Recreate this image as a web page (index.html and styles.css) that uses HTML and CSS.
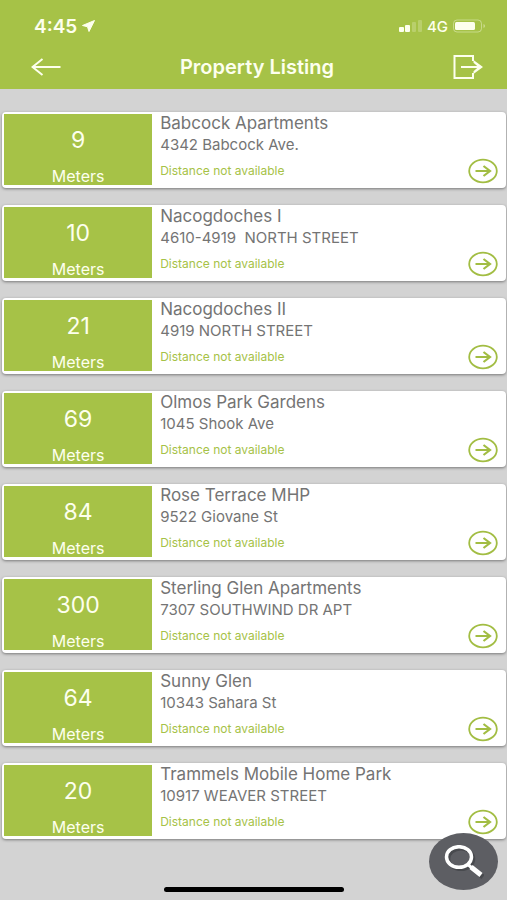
FILE: index.html
```html
<!DOCTYPE html>
<html lang="en">
<head>
<meta charset="utf-8">
<meta name="viewport" content="width=device-width, initial-scale=1">
<title>Property Listing</title>
<link rel="stylesheet" href="styles.css">
</head>
<body>
<svg class="sprite" aria-hidden="true">
  <symbol id="go" viewBox="0 0 30 26">
    <ellipse cx="15" cy="13" rx="13.8" ry="11.3" fill="none" stroke="currentColor" stroke-width="1.8"/>
    <path d="M7.500 13H21M15.500 8l6.500 5-6.500 5" fill="none" stroke="currentColor" stroke-width="2.200"/>
  </symbol>
</svg>
<header class="header">
  <div class="status">
    <div class="status-side">
      <span class="time">4:45</span>
      <svg class="location" viewBox="0 0 13 12" aria-hidden="true"><path d="M12.500 0.500L0.500 5.500L5.500 6.800L7 11.500Z" fill="currentColor" stroke="currentColor" stroke-linejoin="round"/></svg>
    </div>
    <div class="status-side">
      <svg class="signal" viewBox="0 0 23 12" aria-hidden="true"><g fill="currentColor"><rect x="0" y="7" width="5" height="5" rx="1"/><rect x="6" y="5" width="5" height="7" rx="1"/><g opacity=".22"><rect x="13" y="2" width="4" height="10" rx="1"/><rect x="19" y="0" width="4" height="12" rx="1"/></g></g></svg>
      <span class="network">4G</span>
      <svg class="battery" viewBox="0 0 33 14" aria-hidden="true"><rect x=".5" y="1" width="28" height="12" rx="3.500" fill="none" stroke="currentColor" opacity=".4"/><rect x="2" y="3" width="20" height="8" rx="1.500" fill="currentColor"/><path d="M30.500 5v4q1.500-.5 1.500-2t-1.500-2z" fill="currentColor" opacity=".45"/></svg>
    </div>
  </div>
  <nav class="nav">
    <button class="nav-button" type="button" aria-label="Back">
      <svg class="back-icon" viewBox="0 0 30 18" aria-hidden="true"><path d="M29.500 9H1.500M11.500 1L1.500 9l10 8" fill="none" stroke="currentColor" stroke-width="2"/></svg>
    </button>
    <h1 class="title">Property Listing</h1>
    <button class="nav-button" type="button" aria-label="Log out">
      <svg class="exit-icon" viewBox="0 0 30 26" aria-hidden="true"><path d="M20 7V2H1.500V24H20V19M8 13H28" fill="none" stroke="currentColor" stroke-width="2"/><path d="M20.500 6L30 13l-9.500 7v-2.800l4.800-4.200-4.800-4.200z" fill="currentColor"/></svg>
    </button>
  </nav>
</header>
<main>
  <ul class="list">
    <li class="card">
      <div class="distance"><span class="amount">9</span><span class="unit">Meters</span></div>
      <div class="info"><h2 class="name">Babcock Apartments</h2><p class="address">4342 Babcock Ave.</p><p class="note">Distance not available</p></div>
      <a class="go" href="#" aria-label="Open Babcock Apartments"><svg><use href="#go"/></svg></a>
    </li>
    <li class="card">
      <div class="distance"><span class="amount">10</span><span class="unit">Meters</span></div>
      <div class="info"><h2 class="name">Nacogdoches I</h2><p class="address">4610-4919&nbsp; NORTH STREET</p><p class="note">Distance not available</p></div>
      <a class="go" href="#" aria-label="Open Nacogdoches I"><svg><use href="#go"/></svg></a>
    </li>
    <li class="card">
      <div class="distance"><span class="amount">21</span><span class="unit">Meters</span></div>
      <div class="info"><h2 class="name">Nacogdoches II</h2><p class="address">4919 NORTH STREET</p><p class="note">Distance not available</p></div>
      <a class="go" href="#" aria-label="Open Nacogdoches II"><svg><use href="#go"/></svg></a>
    </li>
    <li class="card">
      <div class="distance"><span class="amount">69</span><span class="unit">Meters</span></div>
      <div class="info"><h2 class="name">Olmos Park Gardens</h2><p class="address">1045 Shook Ave</p><p class="note">Distance not available</p></div>
      <a class="go" href="#" aria-label="Open Olmos Park Gardens"><svg><use href="#go"/></svg></a>
    </li>
    <li class="card">
      <div class="distance"><span class="amount">84</span><span class="unit">Meters</span></div>
      <div class="info"><h2 class="name">Rose Terrace MHP</h2><p class="address">9522 Giovane St</p><p class="note">Distance not available</p></div>
      <a class="go" href="#" aria-label="Open Rose Terrace MHP"><svg><use href="#go"/></svg></a>
    </li>
    <li class="card">
      <div class="distance"><span class="amount">300</span><span class="unit">Meters</span></div>
      <div class="info"><h2 class="name">Sterling Glen Apartments</h2><p class="address">7307 SOUTHWIND DR APT</p><p class="note">Distance not available</p></div>
      <a class="go" href="#" aria-label="Open Sterling Glen Apartments"><svg><use href="#go"/></svg></a>
    </li>
    <li class="card">
      <div class="distance"><span class="amount">64</span><span class="unit">Meters</span></div>
      <div class="info"><h2 class="name">Sunny Glen</h2><p class="address">10343 Sahara St</p><p class="note">Distance not available</p></div>
      <a class="go" href="#" aria-label="Open Sunny Glen"><svg><use href="#go"/></svg></a>
    </li>
    <li class="card">
      <div class="distance"><span class="amount">20</span><span class="unit">Meters</span></div>
      <div class="info"><h2 class="name">Trammels Mobile Home Park</h2><p class="address">10917 WEAVER STREET</p><p class="note">Distance not available</p></div>
      <a class="go" href="#" aria-label="Open Trammels Mobile Home Park"><svg><use href="#go"/></svg></a>
    </li>
  </ul>
</main>
<button class="search" type="button" aria-label="Search">
  <svg viewBox="0 0 40 34" aria-hidden="true">
    <g fill="none" stroke="#33353a" stroke-opacity=".5" transform="translate(2 2)"><ellipse cx="15" cy="12" rx="12.500" ry="10.300" stroke-width="3.500"/><path d="M24 19.500L37 30" stroke-width="5"/></g>
    <g fill="none" stroke="#fff"><ellipse cx="15" cy="12" rx="12.500" ry="10.300" stroke-width="3.500"/><path d="M24 19.500L28 23" stroke-width="3"/><path d="M27 22L37 30" stroke-width="5"/></g>
  </svg>
</button>
<div class="home-indicator"></div>
</body>
</html>
```

FILE: styles.css
```css
* {
  box-sizing: border-box;
}

body {
  margin: 0;
  min-height: 100vh;
  background: #d3d3d3;
  color: #747474;
  font-family: Inter, "Liberation Sans", sans-serif;
}

svg {
  display: block;
}

.sprite {
  display: none;
}

h1,
h2,
p,
ul {
  margin: 0;
  padding: 0;
  font-weight: 400;
}

button {
  padding: 0;
  border: 0;
  background: none;
  color: inherit;
}

.header {
  padding: 14px 21px 0 31px;
  background: #a6c247;
  color: #fdffee;
}

.status,
.status-side,
.nav {
  display: flex;
  align-items: center;
}

.status,
.nav {
  justify-content: space-between;
}

.status {
  height: 24px;
  padding-left: 3px;
}

.status-side {
  gap: 5px;
}

.time {
  font-size: 19px;
  font-weight: 600;
}

.location {
  width: 13px;
  height: 12px;
}

.signal {
  width: 23px;
  height: 12px;
}

.network {
  font-size: 15px;
  font-weight: 500;
}

.battery {
  width: 33px;
  height: 14px;
}

.nav {
  height: 51px;
  padding: 6px 3px 0 0;
}

.nav-button {
  display: grid;
  place-items: center;
  height: 40px;
}

.back-icon {
  width: 30px;
  height: 18px;
}

.exit-icon {
  width: 30px;
  height: 26px;
}

.title {
  font-size: 20px;
  line-height: 24px;
  font-weight: 600;
}

.list {
  display: flex;
  flex-direction: column;
  gap: 17px;
  padding: 23px 1px 60px 2px;
  list-style: none;
}

.card {
  display: flex;
  min-height: 76px;
  padding: 0 8px 0 2px;
  border-radius: 4px;
  background: #fff;
  box-shadow: 0 1px 3px #777;
}

.distance {
  display: flex;
  flex-direction: column;
  align-items: center;
  flex: 0 0 30%;
  gap: 13px;
  margin: 2px 0 3px;
  padding-top: 12px;
  background: #a6c247;
  color: #fdffee;
}

.amount {
  font-size: 23px;
  line-height: 28px;
}

.unit {
  font-size: 16px;
  line-height: 18px;
}

.info {
  flex: 1;
  padding-left: 8px;
}

.name {
  font-size: 17px;
  line-height: 22px;
}

.address {
  font-size: 15px;
  line-height: 22px;
}

.note {
  padding-top: 7px;
  color: #a6c247;
  font-size: 12px;
  line-height: 16px;
}

.go {
  align-self: flex-end;
  margin-bottom: 4px;
  color: #a2bd43;
}

.go svg {
  width: 30px;
  height: 26px;
}

.search {
  position: fixed;
  right: 9px;
  bottom: 10px;
  display: grid;
  place-items: center;
  width: 69px;
  height: 57px;
  border-radius: 50%;
  background: #5d5e63;
}

.search svg {
  width: 40px;
  height: 34px;
}

.home-indicator {
  position: fixed;
  bottom: 8px;
  left: 50%;
  width: 180px;
  height: 5px;
  margin-left: -90px;
  border-radius: 3px;
  background: #000;
}
```
